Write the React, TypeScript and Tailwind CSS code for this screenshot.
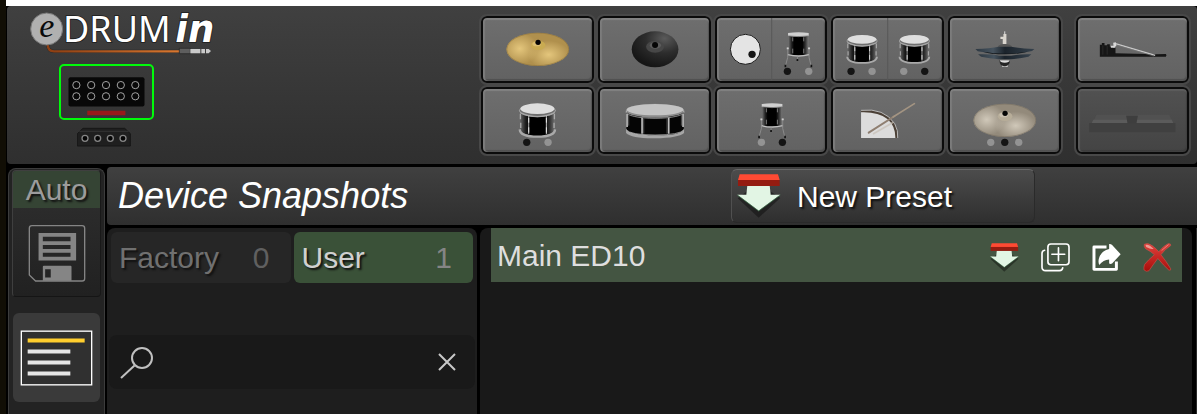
import React, { useState } from 'react';
import clsx from 'clsx';

type Dot = { x: number; on?: boolean };

const Dots: React.FC<{ items: Dot[] }> = ({ items }) => (
  <>
    {items.map((d) => (
      <circle key={d.x} cx={d.x} cy="166" r="11" fill={d.on ? '#141414' : '#939393'} />
    ))}
  </>
);

const Cymbal: React.FC<{ id: string; base: string; light: string; bell: string; edge: string }> = ({
  id,
  base,
  light,
  bell,
  edge,
}) => (
  <>
    <defs>
      <radialGradient id={`${id}-a`}>
        <stop offset="0" stopColor={light} />
        <stop offset="1" stopColor={light} stopOpacity="0" />
      </radialGradient>
      <clipPath id={`${id}-c`}>
        <ellipse cx="169" cy="100" rx="94" ry="50" />
      </clipPath>
    </defs>
    <g clipPath={`url(#${id}-c)`}>
      <rect x="70" y="45" width="200" height="110" fill={base} />
      <ellipse cx="115" cy="98" rx="56" ry="48" fill={`url(#${id}-a)`} />
      <ellipse cx="202" cy="116" rx="62" ry="42" fill={`url(#${id}-a)`} />
      <ellipse cx="169" cy="100" rx="93" ry="49" fill="none" stroke={edge} strokeWidth="3" opacity="0.6" />
    </g>
    <ellipse cx="170" cy="88" rx="22" ry="14" fill={bell} />
    <ellipse cx="166" cy="84" rx="13" ry="7" fill={light} opacity="0.7" />
    <circle cx="170" cy="79" r="8" fill="#050505" />
  </>
);

const RubberCymbal = () => (
  <>
    <defs>
      <radialGradient id="rubber" cx="0.7" cy="0.2" r="0.8">
        <stop offset="0" stopColor="#5a5a5a" />
        <stop offset="0.5" stopColor="#2d2d2d" />
        <stop offset="1" stopColor="#161616" />
      </radialGradient>
    </defs>
    <ellipse cx="170" cy="100" rx="70" ry="54" fill="url(#rubber)" />
    <ellipse cx="170" cy="92" rx="27" ry="18" fill="#474747" />
    <ellipse cx="171" cy="88" rx="17" ry="10" fill="#5c5c5c" />
    <circle cx="170" cy="87" r="9" fill="#060606" />
  </>
);

const shell = (
  <linearGradient id="shell">
    <stop offset="0" stopColor="#6c6c6c" />
    <stop offset="0.16" stopColor="#222" />
    <stop offset="0.28" stopColor="#000" />
    <stop offset="0.7" stopColor="#000" />
    <stop offset="0.85" stopColor="#333" />
    <stop offset="1" stopColor="#777" />
  </linearGradient>
);

// drawn in a 112 x 103 box
const Tom = () => (
  <>
    <defs>{shell}</defs>
    <path d="M3 32 Q56 52 109 32 V86 Q56 116 3 86 Z" fill="url(#shell)" />
    <path d="M3 80 Q4 102 56 102 Q108 102 109 80" fill="none" stroke="#a9a9a9" strokeWidth="7" />
    <ellipse cx="56" cy="22" rx="55" ry="20" fill="#6f6f6f" />
    <ellipse cx="56" cy="24" rx="54" ry="18" fill="none" stroke="#c4c4c4" strokeWidth="2" />
    <path d="M4 30 Q56 54 108 30" fill="none" stroke="#a6a6a6" strokeWidth="4" />
    <ellipse cx="56" cy="18" rx="51" ry="16" fill="#dedede" />
    <path d="M30 38V94M83 38V94" stroke="#b8b8b8" strokeWidth="3" />
    <path d="M30 46V60M83 46V60M30 74V90M83 74V90" stroke="#e6e6e6" strokeWidth="3" />
    <path d="M5 34V50M107 34V50M6 60V76M106 60V76" stroke="#aaa" strokeWidth="4" />
  </>
);

const FloorTom = () => (
  <>
    <defs>{shell}</defs>
    <path d="M1 12H61V68Q31 76 1 68Z" fill="url(#shell)" />
    <path d="M14 16v12M47 16v12M14 50v14M47 50v14" stroke="#aaa" strokeWidth="2" />
    <path d="M-1 68Q31 76 63 68" fill="none" stroke="#c0c0c0" strokeWidth="4" />
    <path d="M0 3Q31 -2 62 3V11Q31 16 0 11Z" fill="#d0d0d0" />
    <path d="M1 11Q31 17 61 11" fill="none" stroke="#8c8c8c" strokeWidth="2" />
    <path d="M-1 46V76L-8 102M63 46V76L69 102M28 73V84" fill="none" stroke="#929292" strokeWidth="2.5" />
    <path d="M-4 49h6M60 49h6" stroke="#ccc" strokeWidth="5" />
    <path d="M-8 98V106M70 98V106M28 81V87" stroke="#111" strokeWidth="5" />
  </>
);

const Snare = () => (
  <>
    <path d="M84 70V132Q96 150 170 150T256 132V70Z" fill="#050505" />
    <path d="M83 126Q90 144 170 145T257 126V138Q240 153 170 154T83 138Z" fill="#a6a6a6" />
    <path d="M83 128Q96 144 170 144T257 128" fill="none" stroke="#d0d0d0" strokeWidth="2" />
    <ellipse cx="170" cy="71" rx="88" ry="21" fill="#8c8c8c" />
    <ellipse cx="170" cy="75" rx="87" ry="19" fill="none" stroke="#c9c9c9" strokeWidth="2" />
    <ellipse cx="170" cy="68" rx="85" ry="17" fill="#c4c4c4" />
    <path d="M86 80V120M131 92V140M211 92V140M254 80V120" stroke="#bdbdbd" strokeWidth="5" />
    <path d="M91 84V116M136 94V140M206 94V140M249 84V116" stroke="#777" strokeWidth="2" />
  </>
);

const HiHat = () => (
  <>
    <defs>
      <linearGradient id="hat">
        <stop offset="0" stopColor="#2d3842" />
        <stop offset="0.3" stopColor="#46535e" />
        <stop offset="0.5" stopColor="#1b232b" />
        <stop offset="1" stopColor="#36424d" />
      </linearGradient>
    </defs>
    <path d="M169 46V60" stroke="#ddd" strokeWidth="3" />
    <path d="M165 54H174V84H163V69H156V62H165Z" fill="#dad6cf" />
    <path d="M147 94Q152 84 169 84T192 94Z" fill="#555" />
    <path d="M81 99Q125 97 152 92H188Q214 97 258 99L251 105Q214 113 170 114Q124 113 88 106Z" fill="url(#hat)" />
    <path d="M104 107Q169 119 236 107Q210 115 169 115T104 107Z" fill="#050a0e" />
    <path d="M89 115Q132 114 152 119H188Q212 114 249 115L240 122Q206 129 187 130H151Q124 127 98 122Z" fill="url(#hat)" />
    <path d="M153 132H185Q184 150 169 151T153 132Z" fill="#252525" />
    <path d="M154 133H184Q183 140 169 140T154 133Z" fill="#ddd" />
    <path d="M160 148Q169 155 178 148V153H162Z" fill="#d0d0d0" />
  </>
);

const Pedal = () => (
  <>
    <path d="M70 86h6v-5h8v7h8v-3h8v7h10v4h7v16l120 3l31 -1q4 4 0 8H70Z" fill="#161616" />
    <path d="M79 88v28M92 90v26" stroke="#333" strokeWidth="2" />
    <path d="M117 83L236 118" stroke="#c9c9c9" strokeWidth="4" />
    <path d="M119 87L232 120" stroke="#777" strokeWidth="2" />
    <path d="M110 80L118 79L120 88L114 95H103V89H111Z" fill="#d8d8d8" />
  </>
);

const SideStick = () => (
  <>
    <path d="M89 70Q166 60 197 124L199 153H190Q180 86 89 76Z" fill="#4b4036" />
    <path d="M89 76Q140 74 168 96Q192 116 192 153H89Z" fill="#dcdcdc" />
    <path d="M89 70Q158 62 190 110Q201 130 199 153" fill="none" stroke="#b9b9b9" strokeWidth="3" />
    <path d="M125 141L186 106" stroke="#c8bfb5" strokeWidth="5" opacity="0.7" />
    <path d="M112 137L190 87" stroke="#8f7f71" strokeWidth="6" strokeLinecap="round" />
    <path d="M185 90L249 50" stroke="#a39482" strokeWidth="5" strokeLinecap="round" />
  </>
);

const KickAndTom = () => (
  <>
    <path d="M169 6V194" stroke="#585858" strokeWidth="3" />
    <circle cx="90" cy="100" r="45" fill="#e4e4e4" stroke="#1a1a1a" strokeWidth="3" />
    <circle cx="110" cy="115" r="11" fill="#151515" />
    <g transform="translate(218 48)">
      <FloorTom />
    </g>
    <Dots items={[{ x: 216, on: true }, { x: 280 }]} />
  </>
);

const TwoToms = () => (
  <>
    <path d="M169 6V194" stroke="#585858" strokeWidth="3" />
    <g transform="translate(45 55) scale(.84)">
      <Tom />
    </g>
    <g transform="translate(202 55) scale(.84)">
      <Tom />
    </g>
    <Dots items={[{ x: 59, on: true }, { x: 122 }, { x: 217 }, { x: 280, on: true }]} />
  </>
);

const BarPad = () => (
  <>
    <path d="M48 108L60 83H278L290 108Z" fill="#515151" />
    <path d="M46 108L50 98H286L290 108Z" fill="#5b5b5b" />
    <path d="M38 108H297V136H38Z" fill="#404040" />
    <path d="M149 86H184L180 109H153Z" fill="#3e3e3e" />
  </>
);

const pads: { name: string; art: React.ReactNode }[] = [
  { name: 'Ride', art: <Cymbal id="ride" base="#b0904d" light="#e4c67c" bell="#c9ab51" edge="#8a7140" /> },
  { name: 'Rubber cymbal', art: <RubberCymbal /> },
  { name: 'Kick and floor tom', art: <KickAndTom /> },
  { name: 'Toms', art: <TwoToms /> },
  { name: 'Hi-hat', art: <HiHat /> },
  {
    name: 'Rack tom',
    art: (
      <>
        <g transform="translate(112 47)">
          <Tom />
        </g>
        <Dots items={[{ x: 136, on: true }, { x: 200 }]} />
      </>
    ),
  },
  { name: 'Snare', art: <Snare /> },
  {
    name: 'Floor tom',
    art: (
      <>
        <g transform="translate(139 48)">
          <FloorTom />
        </g>
        <Dots items={[{ x: 138 }, { x: 201, on: true }]} />
      </>
    ),
  },
  { name: 'Side stick', art: <SideStick /> },
  {
    name: 'Crash',
    art: (
      <>
        <Cymbal id="crash" base="#938a7b" light="#d0c8b9" bell="#b7ad99" edge="#736b5e" />
        <Dots items={[{ x: 127 }, { x: 169, on: true }, { x: 211 }]} />
      </>
    ),
  },
];

const Pad: React.FC<{ name: string; disabled?: boolean; children: React.ReactNode }> = ({ name, disabled, children }) => (
  <button
    aria-label={name}
    disabled={disabled}
    className={clsx(
      'h-[67px] w-full overflow-hidden rounded-md border-2 border-[#0b0b0b] outline-2 outline-[#484848]',
      disabled
        ? 'bg-linear-to-b from-[#515151] to-[#444444] shadow-[inset_0_2px_1px_#5d5d5d,inset_2px_0_1px_#595959,inset_-1px_-2px_1px_#3c3c3c]'
        : 'bg-linear-to-b from-[#6e6e6e] to-[#626262] shadow-[inset_0_2px_1px_#828282,inset_2px_0_1px_#7c7c7c,inset_-1px_-2px_1px_#505050]'
    )}
  >
    <svg viewBox="6 6 324 189" className="h-full w-full">
      {children}
    </svg>
  </button>
);

const Logo = () => (
  <svg viewBox="84 0 576 171" className="h-[57px] w-[192px]" role="img" aria-label="eDRUMin">
    <defs>
      <linearGradient id="cable">
        <stop offset="0" stopColor="#8d3e12" />
        <stop offset="1" stopColor="#d9772f" />
      </linearGradient>
    </defs>
    <path d="M143 134Q144 154 162 154H538" fill="none" stroke="#2a2a2a" strokeWidth="10" />
    <path d="M143 134Q144 154 162 154H538V155" fill="none" stroke="url(#cable)" strokeWidth="7" />
    <circle cx="140" cy="87" r="48" fill="#b0b0b0" stroke="#777" strokeWidth="3" />
    <g stroke="#1c1c1c" strokeWidth="5" paintOrder="stroke" fill="#fff">
      <text x="189" y="126" fontSize="108" fontFamily="'Noto Sans', sans-serif">DRUM</text>
      <text x="526" y="126" fontSize="111" fontFamily="'DejaVu Sans', sans-serif" fontWeight="bold" fontStyle="italic">in</text>
    </g>
    <text x="118" y="111" fontSize="102" fontFamily="'Liberation Serif', serif" fontStyle="italic" fill="#0a0a0a">e</text>
    <path d="M538 145H571V161H538Z" fill="#5e5e5e" stroke="#222" strokeWidth="2" />
    <path d="M571 147H601V160H571ZM604 147H615V160H604ZM618 147H626L633 153L626 160H618Z" fill="#c9c9c9" />
  </svg>
);

const DeviceTen = () => (
  <svg viewBox="182 198 275 158" className="h-full w-full">
    <rect x="204" y="232" width="231" height="89" rx="6" fill="#080808" />
    {[228, 273, 318, 363, 407].map((x) =>
      [256, 290].map((y) => <circle key={`${x}-${y}`} cx={x} cy={y} r="11" fill="none" stroke="#a5a5a5" strokeWidth="3" />)
    )}
    <path d="M261 334H377V348H261Z" fill="#981a1a" />
  </svg>
);

const DeviceFour = () => (
  <svg viewBox="231 380 162 58" className="h-full w-full">
    <path d="M232 436V399L249 383H374L391 399V436Z" fill="#1f1f1f" stroke="#161616" strokeWidth="3" />
    <path d="M238 392H386" stroke="#303030" strokeWidth="4" />
    {[255, 293, 331, 369].map((x) => (
      <circle key={x} cx={x} cy="413" r="9" fill="#050505" stroke="#858585" strokeWidth="4" />
    ))}
  </svg>
);

const PresetArrow: React.FC<{ className: string }> = ({ className }) => (
  <svg viewBox="110 40 132 132" className={className}>
    <path d="M112 113L140 92H210L240 112L175 171Z" fill="#000" opacity="0.38" />
    <path d="M141 74H208L211 102H240L175 150L111 102H138Z" fill="#e2f5e4" />
    <path d="M111 103L175 151L240 103" fill="none" stroke="#417a50" strokeWidth="2" />
    <path d="M118 41H233L238 58H113Z" fill="#ff4a33" />
    <path d="M113 58H238V76H113Z" fill="#941c11" />
  </svg>
);

const DuplicateIcon = () => (
  <svg viewBox="242 250 88 88" className="h-[29px] w-[29px]" fill="none" stroke="#fff" strokeWidth="5" strokeLinecap="round">
    <rect x="263" y="253" width="64" height="63" rx="9" />
    <path d="M295 265V304M275 284H314M253 272Q245 273 245 282V323Q245 334 256 334H298Q307 334 308 325" />
  </svg>
);

const ShareIcon = () => (
  <svg viewBox="395 250 88 88" className="h-[29px] w-[29px]">
    <path d="M439 262H401V330H469V306" fill="none" stroke="#fff" strokeWidth="9" strokeLinejoin="round" />
    <path d="M447 253Q452 252 456 256L482 284L456 312Q451 315 447 312V300Q429 301 417 317Q412 305 418 291Q426 272 447 268Z" fill="#fff" />
  </svg>
);

const DeleteIcon = () => (
  <svg viewBox="548 248 90 92" className="h-[29px] w-[29px]">
    <defs>
      <linearGradient id="cross" x2="0" y2="1">
        <stop offset="0" stopColor="#e0413c" />
        <stop offset="1" stopColor="#a80d0b" />
      </linearGradient>
    </defs>
    <path
      d="M551 252Q563 246 577 257Q589 266 597 276Q611 257 627 250Q636 249 635 256Q616 268 604 285Q620 305 635 330Q636 336 629 334Q612 319 594 297Q578 318 566 336Q557 341 550 333Q549 324 552 316Q563 302 583 285Q571 274 555 266Q549 259 551 252Z"
      fill="url(#cross)"
      stroke="#c9544c"
      strokeWidth="2"
    />
    <path d="M555 254Q566 251 581 267Q571 269 557 261Z" fill="#f19a94" />
    <path d="M606 272L628 253" stroke="#ee857e" strokeWidth="3" />
  </svg>
);

const FloppyIcon = () => (
  <svg viewBox="82 190 176 177" className="h-[59px] w-[58px]">
    <path d="M94 194H246Q254 194 254 202V354Q254 362 246 362H105L86 344V202Q86 194 94 194Z" fill="none" stroke="#858585" strokeWidth="4" />
    <path d="M114 216H228V300H114ZM127 228V241H211V228ZM127 253V265H211V253ZM127 276V288H211V276Z" fill="#858585" fillRule="evenodd" />
    <path d="M130 316H211Q214 316 214 319V361H127V319Q127 316 130 316ZM134 326V351H151V326Z" fill="#858585" fillRule="evenodd" />
  </svg>
);

const ListIcon = () => (
  <svg viewBox="61 509 219 167" className="h-[56px] w-[73px]">
    <rect x="65" y="512" width="211" height="161" fill="#303030" stroke="#fff" strokeWidth="4" />
    <path d="M84 534H255V546H84Z" fill="#ffce2e" />
    <path d="M84 567H212V579H84ZM84 600H212V612H84ZM84 633H212V645H84Z" fill="#e6e6e6" />
  </svg>
);

const banks = [
  { id: 'factory', label: 'Factory', count: 0 },
  { id: 'user', label: 'User', count: 1 },
];

const snapshots = ['Main ED10'];

const Header = () => (
  <header className="ml-px flex items-start rounded-sm bg-linear-to-b from-[#404040] to-[#2f2f2f] pr-2 pb-[10px]">
    {/* the logo's own box leaves room above the letters, so it starts above the bar's edge */}
    <div className="-mt-1.5 flex flex-col items-start pl-[21px]">
      <Logo />
      <div className="mt-[7px] ml-[31px] flex flex-col gap-[7px]">
        <button aria-label="eDRUMin 10" className="h-[56px] w-[95px] rounded-[5px] border-2 border-[#00fb0a]">
          <DeviceTen />
        </button>
        <button aria-label="eDRUMin 4" className="ml-[18px] h-5 w-[54px]">
          <DeviceFour />
        </button>
      </div>
    </div>
    <div className="mt-[10px] ml-auto grid w-[580px] grid-cols-5 gap-1">
      {pads.map((p) => (
        <Pad key={p.name} name={p.name}>
          {p.art}
        </Pad>
      ))}
    </div>
    <div className="mt-[10px] ml-[15px] grid w-[113px] gap-1">
      <Pad name="Pedal">
        <Pedal />
      </Pad>
      <Pad name="Bar pad" disabled>
        <BarPad />
      </Pad>
    </div>
  </header>
);

const Sidebar = () => (
  <aside className="mt-px flex w-[97px] shrink-0 flex-col items-center gap-4 rounded-t-lg border border-b-0 border-[#3c3c3c] bg-[#232323] pt-px">
    <button className="flex h-[127px] w-[89px] flex-col overflow-hidden rounded-sm border border-[#3f3f3f] border-r-[#181818] border-b-[#151515] bg-linear-to-b from-[#303030] to-[#212121] text-[#9c9c9c]">
      <span className="h-[37px] w-full bg-[#354434] leading-[37px] [text-shadow:2px_2px_2px_#111]">Auto</span>
      <span className="mt-4 flex w-full justify-center">
        <FloppyIcon />
      </span>
    </button>
    <button aria-label="Snapshots" className="flex h-[89px] w-[87px] items-center justify-center rounded-md bg-[#3a3a3a]">
      <ListIcon />
    </button>
  </aside>
);

function App() {
  const [bank, setBank] = useState('user');
  const [query, setQuery] = useState('');

  return (
    <div className="flex min-h-screen flex-col bg-[#110e05] pl-1.5 font-['Liberation_Sans',Arial,sans-serif] text-[30px]">
      <div className="h-1.5 bg-white" />
      <div className="flex grow flex-col bg-black">
        <Header />
        <div className="mt-[3px] ml-0.5 flex grow gap-0.5">
          <Sidebar />
          <main className="flex min-w-0 grow flex-col gap-[3px]">
            <div className="flex h-[58px] items-center rounded-l-sm bg-linear-to-b from-[#404040] to-[#2f2f2f] pl-[11px]">
              <h1 className="w-[613px] text-4xl text-white italic">Device Snapshots</h1>
              <button className="flex h-[54px] w-[304px] items-center gap-4 rounded-md border border-[#2a2a2a] border-t-[#666] border-l-[#505050] bg-linear-to-b from-[#4c4c4c] to-[#2f2f2f] pl-[5px] text-white [text-shadow:2px_2px_2px_#111]">
                <PresetArrow className="h-[44px] w-[44px]" />
                New Preset
              </button>
            </div>
            <div className="flex grow gap-[3px]">
              <section className="w-[370px] shrink-0 rounded-t-lg bg-[#1e1e1e]">
                <div className="grid grid-cols-2 gap-[3px] px-1 pt-1">
                  {banks.map((b) => (
                    <button
                      key={b.id}
                      onClick={() => setBank(b.id)}
                      className={clsx(
                        'flex h-[51px] items-center justify-between rounded-md pr-[21px] pl-2',
                        bank === b.id ? 'bg-[#3a5138] text-[#d0d0d0]' : 'bg-[#262626] text-[#707070]'
                      )}
                    >
                      <span className="[text-shadow:2px_2px_2px_#111]">{b.label}</span>
                      <span className={bank === b.id ? 'text-[#858585]' : 'text-[#606060]'}>{b.count}</span>
                    </button>
                  ))}
                </div>
                <div className="mx-0.5 mt-[52px] flex h-[54px] items-center rounded-lg bg-[#191919] px-[11px]">
                  <label htmlFor="search" aria-label="Search">
                    <svg viewBox="0 0 33 33" className="h-[33px] w-[33px]" fill="none" stroke="#c0c0c0" strokeWidth="2">
                      <circle cx="22" cy="12" r="10" />
                      <path d="M14.500 19.500L1 32" />
                    </svg>
                  </label>
                  <input
                    id="search"
                    value={query}
                    onChange={(e) => setQuery(e.target.value)}
                    className="min-w-0 grow bg-transparent px-2 text-[#d0d0d0] outline-none"
                  />
                  <button aria-label="Clear search" onClick={() => setQuery('')} className="mr-2">
                    <svg viewBox="0 0 18 18" className="h-[18px] w-[18px]" stroke="#c8c8c8" strokeWidth="2">
                      <path d="M1 1L17 17M17 1L1 17" />
                    </svg>
                  </button>
                </div>
              </section>
              <section className="min-w-0 grow rounded-t-lg bg-[#191919] pr-[10px] pl-[11px]">
                <ul>
                  {snapshots.map((name) => (
                    <li key={name} className="flex h-[54px] items-center bg-[#445542] pr-[10px] pl-1.5 text-[#dedede]">
                      <span className="grow">{name}</span>
                      <div className="flex items-center gap-[22px] pt-1">
                        <button aria-label="Save to preset">
                          <PresetArrow className="h-[29px] w-[29px]" />
                        </button>
                        <button aria-label="Duplicate">
                          <DuplicateIcon />
                        </button>
                        <button aria-label="Export">
                          <ShareIcon />
                        </button>
                        <button aria-label="Delete">
                          <DeleteIcon />
                        </button>
                      </div>
                    </li>
                  ))}
                </ul>
              </section>
              <div className="w-0.5 border-r border-[#2a2a2a]" />
            </div>
          </main>
        </div>
      </div>
    </div>
  );
}

export default App;
